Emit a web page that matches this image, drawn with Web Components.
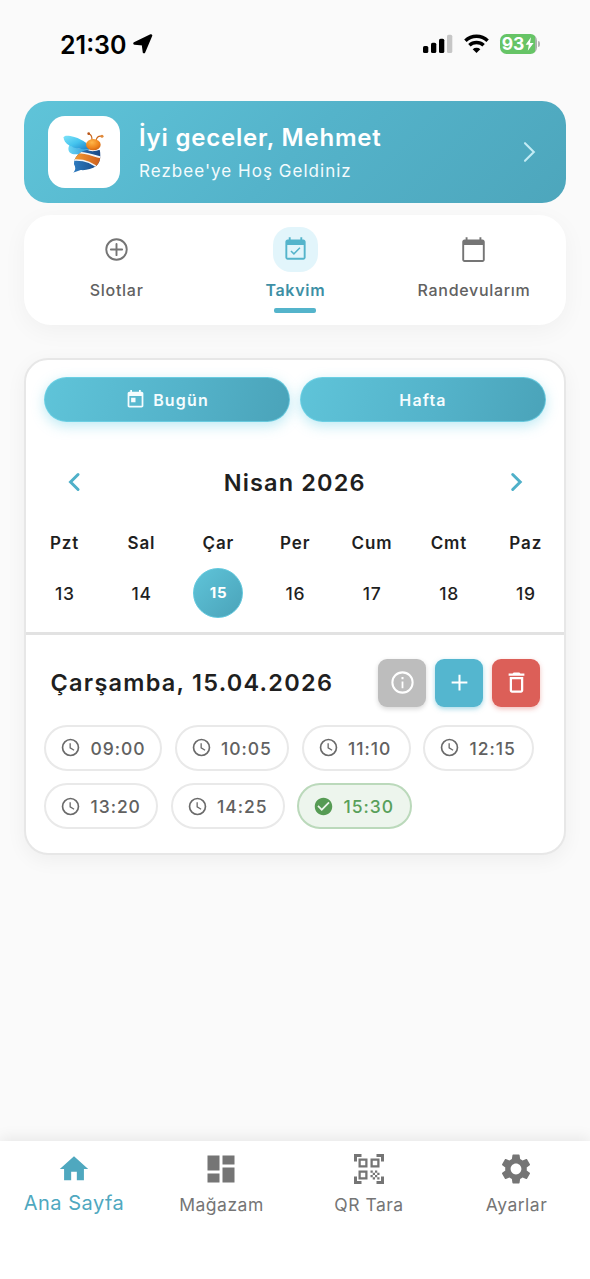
<!DOCTYPE html>
<html lang="tr">
<head>
<meta charset="utf-8">
<title>Rezbee</title>
<style>
html,body{margin:0;height:100%}
body{background:#fafafa;font-family:Inter,"Liberation Sans",sans-serif;color:#1f1f1f}
</style>
</head>
<body>
<rez-app></rez-app>
<script>
const ICONS = {
  plusCircle: '<g fill="none" stroke="currentColor" stroke-width="1.7"><circle cx="12" cy="12" r="9.1"/><path d="M12 7v10M7 12h10" stroke-linecap="round"/></g>',
  eventCheck: '<path d="M16.400 10.900l-.9-.9-4.910 4.990-2.200-2.200-.9.9L10.590 16.800zM19 3h-1V1h-1.700v2H7.700V1H6v2H5c-1.11 0-1.99.9-1.99 2L3 19c0 1.1.89 2 2 2h14c1.1 0 2-.9 2-2V5c0-1.1-.9-2-2-2zm.3 16.300H4.700V8h14.600v11.300z"/>',
  calendar: '<path d="M20 3h-1V1h-1.7v2H6.700V1H5v2H4c-1.100 0-2 .9-2 2v16c0 1.100.9 2 2 2h16c1.100 0 2-.9 2-2V5c0-1.100-.9-2-2-2zm.3 18.300H3.700V8h16.600v13.300z"/>',
  today: '<path d="M19 3h-1V1h-2v2H8V1H6v2H5c-1.11 0-1.99.9-1.99 2L3 19c0 1.1.89 2 2 2h14c1.1 0 2-.9 2-2V5c0-1.1-.9-2-2-2zm0 16H5V8h14v11zM7 10h5v5H7z"/>',
  left: '<path d="M14.700 7L9.700 12l5 5" fill="none" stroke="currentColor" stroke-width="2" stroke-linecap="round"/>',
  right: '<path d="M9.800 7L14.800 12l-5 5" fill="none" stroke="currentColor" stroke-width="2" stroke-linecap="round"/>',
  next: '<path d="M8 3.200L16.800 12l-8.800 8.800" fill="none" stroke="currentColor" stroke-width="2.100" stroke-linecap="round"/>',
  info: '<circle cx="12" cy="12" r="9" fill="none" stroke="currentColor" stroke-width="1.800"/><path d="M11.200 11h1.600v6h-1.600zM11.100 7.200h1.800v1.800h-1.800z"/>',
  plus: '<path d="M19 12.900h-6.100V19h-1.800v-6.100H5v-1.800h6.100V5h1.800v6.100H19z"/>',
  trash: '<path d="M6 19c0 1.1.9 2 2 2h8c1.1 0 2-.9 2-2V7H6v12zM8 9h8v10H8V9zm7.500-5l-1-1h-5l-1 1H5v2h14V4z"/>',
  clock: '<circle cx="12" cy="12" r="9.100" fill="none" stroke="currentColor" stroke-width="1.900"/><path d="M11.600 7v5.500l4.500 2.700" fill="none" stroke="currentColor" stroke-width="1.500"/>',
  check: '<path d="M12 2C6.480 2 2 6.480 2 12s4.480 10 10 10 10-4.480 10-10S17.520 2 12 2zm-2 15l-5-5 1.410-1.410L10 14.170l7.590-7.590L19 8l-9 9z"/>',
  home: '<path d="M10 20v-6h4v6h5v-8h3L12 3 2 12h3v8z"/>',
  dashboard: '<path d="M3 13h8V3H3v10zm0 8h8v-6H3v6zm10 0h8V11h-8v10zm0-18v6h8V3h-8z"/>',
  qr: '<path d="M9.500 6.500v3h-3v-3h3M11 5H5v6h6V5zM9.500 14.500v3h-3v-3h3M11 13H5v6h6v-6zM17.500 6.500v3h-3v-3h3M19 5h-6v6h6V5zM13 13h1.500v1.500H13zM14.500 14.500H16V16h-1.500zM16 13h1.500v1.500H16zM13 16h1.500v1.500H13zM14.500 17.500H16V19h-1.500zM16 16h1.500v1.500H16zM17.500 14.500H19V16h-1.500zM17.500 17.500H19V19h-1.500zM22 7h-2V4h-3V2h5v5zM22 22v-5h-2v3h-3v2h5zM2 22h5v-2H4v-3H2v5zM2 2v5h2V4h3V2H2z" fill-rule="evenodd"/>',
  gear: '<path d="M19.140 12.940c.04-.3.06-.61.06-.94 0-.32-.02-.64-.07-.94l2.030-1.580c.18-.14.23-.41.12-.61l-1.920-3.320c-.12-.22-.37-.29-.59-.22l-2.390.96c-.5-.38-1.030-.7-1.620-.94l-.36-2.540c-.04-.24-.24-.41-.48-.41h-3.840c-.24 0-.43.17-.47.41l-.36 2.540c-.59.24-1.130.57-1.620.94l-2.390-.96c-.22-.08-.47 0-.59.22L2.740 8.870c-.12.21-.08.47.12.61l2.030 1.580c-.05.3-.09.63-.09.94s.02.64.07.94l-2.030 1.580c-.18.14-.23.41-.12.61l1.920 3.320c.12.22.37.29.59.22l2.390-.96c.5.38 1.030.7 1.620.94l.36 2.540c.05.24.24.41.48.41h3.840c.24 0 .44-.17.47-.41l.36-2.540c.59-.24 1.130-.56 1.620-.94l2.390.96c.22.08.47 0 .59-.22l1.920-3.320c.12-.22.07-.47-.12-.61l-2.010-1.580zM12 15.600c-1.980 0-3.600-1.620-3.600-3.600s1.620-3.600 3.600-3.600 3.600 1.620 3.600 3.600-1.620 3.600-3.600 3.600z"/>'
};

const define = (name, render) => customElements.define(name, class extends HTMLElement {
  constructor() { super(); this.attachShadow({ mode: 'open' }); }
  connectedCallback() { this.shadowRoot.innerHTML = render(this); }
});
const attr = (el, n, d = '') => el.getAttribute(n) ?? d;

define('rez-icon', el => `
<style>:host{display:block;flex:none;width:${attr(el,'size',24)}px;height:${attr(el,'size',24)}px}svg{display:block;width:100%;height:100%}</style>
<svg viewBox="0 0 24 24" fill="currentColor">${ICONS[attr(el,'name')]}</svg>`);

define('status-bar', () => `
<style>
:host{display:flex;justify-content:space-between;align-items:center;height:88px;padding:0 50px 0 60px;box-sizing:border-box;color:#000}
.l,.r{display:flex;align-items:center}
.time{font-weight:600;font-size:25px;line-height:30px;letter-spacing:0;padding-top:1px}
.l svg{margin-left:6px}
.wifi{margin:0 11px 0 11px}
.bat{display:flex;align-items:center}
.cell{width:37px;height:20px;border-radius:6.500px;background:linear-gradient(90deg,#66c466 94%,#a9b5aa 94%);display:flex;align-items:center;justify-content:center;color:#fff;font-weight:700;font-size:17.500px;line-height:20px;letter-spacing:-.2px}
.cell svg{margin-left:1px}
.nub{width:2px;height:6px;border-radius:0 2px 2px 0;background:#b5b5b5;margin-left:1.500px}
</style>
<div class="l"><span class="time">21:30</span>
<svg width="20" height="20" viewBox="0 0 20 20"><path d="M1.500 9.500L18 1.500 11 18 10 10.300z" stroke="#000" stroke-width="2.600" stroke-linejoin="round"/></svg></div>
<div class="r">
<svg width="30" height="20" viewBox="0 0 30 20"><rect x="0" y="12" width="5.300" height="7" rx="1.600"/><rect x="8" y="8.700" width="5.300" height="10.300" rx="1.600"/><rect x="16" y="4.700" width="5.300" height="14.300" rx="1.600"/><rect x="24" y=".700" width="5.300" height="18.300" rx="1.600" fill="#c6c6c6"/></svg>
<svg class="wifi" width="25" height="20" viewBox="0 0 25 20"><g fill="none" stroke="#000" stroke-width="3.500"><path d="M1.400 6.700a16 16 0 0 1 22.200 0"/><path d="M5.400 11.300a10.300 10.300 0 0 1 14.200 0"/></g><path d="M8.700 15.200a5.600 5.600 0 0 1 7.600 0L12.500 19z"/></svg>
<div class="bat"><div class="cell"><span>93</span><svg width="9" height="14" viewBox="0 0 9 14"><path d="M6 .300L.600 7.700h3.200L2.800 13.700 8.600 5.900H5z" fill="#fff"/></svg></div><div class="nub"></div></div>
</div>`);

define('bee-logo', () => `
<style>:host{display:block;width:72px;height:72px;border-radius:17px;background:#fff;flex:none}svg{display:block}</style>
<svg width="72" height="72" viewBox="145 317 216 216">
<defs>
<linearGradient id="w" x1="0" y1="0" x2="1" y2="1"><stop offset="0" stop-color="#7fe3f8"/><stop offset=".5" stop-color="#45c4ee"/><stop offset="1" stop-color="#1c7cc4"/></linearGradient>
<linearGradient id="w2" x1="0" y1="0" x2="1" y2="0"><stop offset="0" stop-color="#6bd6f4"/><stop offset="1" stop-color="#2a93d6"/></linearGradient>
<radialGradient id="h" cx=".4" cy=".3" r=".8"><stop offset="0" stop-color="#ffb648"/><stop offset=".6" stop-color="#ee841c"/><stop offset="1" stop-color="#c75c12"/></radialGradient>
<linearGradient id="o" x1="0" y1="0" x2="1" y2="0"><stop offset="0" stop-color="#f7a136"/><stop offset="1" stop-color="#c9581a"/></linearGradient>
<linearGradient id="b" x1="0" y1="0" x2="1" y2="0"><stop offset="0" stop-color="#2f7fc4"/><stop offset="1" stop-color="#17427f"/></linearGradient>
<clipPath id="c"><path d="M262 419C275 425 290 422 300 418C305 436 302 456 290 467C277 476 256 481 243 479L220 487C229 479 228 470 223 462C222 440 240 424 262 419z"/></clipPath>
</defs>
<path d="M209 405C224 412 250 419 271 416C262 427 236 435 218 431C205 427 204 414 209 405z" fill="url(#w2)"/>
<path d="M192 381C193 374 207 375 224 380C251 388 268 403 272 415C255 420 226 414 210 406C197 399 191 389 192 381z" fill="url(#w)"/>
<g fill="none" stroke="#c9661c" stroke-width="3.500" stroke-linecap="round"><path d="M277 388C277 379 273 372 267 370M290 388C292 380 298 376 307 378"/></g>
<circle cx="267" cy="370" r="4" fill="#b95518"/><circle cx="307" cy="378" r="4.500" fill="#e08a3a"/>
<ellipse cx="281" cy="403" rx="22" ry="17" fill="url(#h)"/>
<g clip-path="url(#c)"><rect x="215" y="410" width="95" height="82" fill="url(#b)"/>
<path d="M222 428C252 420 280 438 310 442L300 478C276 454 248 446 215 450z" fill="url(#o)" stroke="#f3f6fa" stroke-width="5"/>
</g>
</svg>`);

define('welcome-card', el => `
<style>
:host{display:flex;align-items:center;height:102px;border-radius:24px;padding:0 25px 0 24px;box-sizing:border-box;color:#fff;background:linear-gradient(135deg,#5fc4d9 0%,#54b3ca 50%,#4da6bc 100%)}
.t{flex:1;margin-left:19px;margin-top:-1px}
.a{font-weight:600;font-size:24px;line-height:34px;letter-spacing:.78px;white-space:nowrap}
.b{font-size:17px;line-height:24px;margin-top:4px;letter-spacing:1.030px;color:#f3fbfd;white-space:nowrap}
rez-icon{color:#c3ecf5}
</style>
<bee-logo></bee-logo><div class="t"><div class="a"><slot name="title"></slot></div><div class="b"><slot></slot></div></div><rez-icon name="next" size="24"></rez-icon>`);

define('tab-item', el => { const on = el.hasAttribute('active'); return `
<style>
:host{display:flex;flex-direction:column;align-items:center;flex:1;color:${on ? '#3d8fa5' : '#616161'}}
.i{width:45px;height:45px;border-radius:18px;display:flex;align-items:center;justify-content:center;background:${on ? '#e2f5fb' : 'none'};color:${on ? '#54b4cb' : '#757575'}}
.t{font-size:16px;line-height:24px;margin-top:6px;font-weight:${on ? 570 : 460};letter-spacing:.7px;padding-left:.7px}
.u{width:42px;height:4.500px;border-radius:2px;margin-top:6px;background:${on ? '#54b4cb' : 'none'}}
</style><div class="i"><rez-icon name="${attr(el,'icon')}" size="27"></rez-icon></div><div class="t"><slot></slot></div><div class="u"></div>`});

define('tab-strip', () => `
<style>:host{display:flex;box-sizing:border-box;height:109.500px;padding:12px 3px 0;border-radius:27px;background:#fff;box-shadow:0 6px 24px rgba(0,0,0,.045)}</style><slot></slot>`);

define('pill-button', el => `
<style>:host{display:flex;flex:1;height:45px;box-sizing:border-box;border:1px solid rgba(112,212,232,.75);border-radius:23px;align-items:center;justify-content:center;gap:7px;color:#f4fcfe;background:linear-gradient(105deg,#5fc4d9,#54b3ca 55%,#4aa3b9) border-box;box-shadow:0 4px 13px rgba(84,200,225,.38);font-weight:570;font-size:16px;letter-spacing:1.150px}</style>
${el.hasAttribute('icon') ? `<rez-icon name="${attr(el,'icon')}" size="21"></rez-icon>` : ''}<span><slot></slot></span>`);

define('day-cell', el => { const on = el.hasAttribute('selected'); return `
<style>
:host{display:flex;flex-direction:column;align-items:center}
.w{font-weight:570;font-size:17px;line-height:24px;letter-spacing:.9px;padding-left:.4px}
.d{width:50px;height:50px;border-radius:50%;box-sizing:border-box;margin-top:13px;display:flex;align-items:center;justify-content:center;font-weight:450;font-size:17.500px;letter-spacing:.8px;padding:1px 0 0 .8px;
${on ? 'background:linear-gradient(135deg,#5fc4d9,#4aa3b9);border:1px solid #62c9de;color:#fff;font-size:15px;font-weight:650;padding-top:0' : ''}}
</style><div class="w">${attr(el,'name')}</div><div class="d"><slot></slot></div>`});

define('action-button', el => `
<style>:host{display:flex;width:48px;height:48px;border-radius:9px;align-items:center;justify-content:center;color:#fff;background:${attr(el,'color')};box-shadow:0 2px 5px ${attr(el,'glow')}}</style><rez-icon name="${attr(el,'icon')}" size="27"></rez-icon>`);

define('slot-chip', el => { const on = el.hasAttribute('booked'); return `
<style>:host{display:flex;align-items:center;box-sizing:border-box;width:${attr(el,'width')}px;height:46px;border-radius:23px;border:2px solid ${on ? '#bbd9bb' : '#e9e9e9'};background:${on ? '#edf5ed' : '#fff'};padding-left:14px;gap:9.500px;color:${on ? '#58a05a' : '#616161'};font-weight:550;font-size:17.500px;letter-spacing:.95px}
span{margin-top:1px}
rez-icon{color:${on ? '#569b54' : '#6a6a6a'}}</style><rez-icon name="${on ? 'check' : 'clock'}" size="21"></rez-icon><span><slot></slot></span>`});

define('calendar-card', () => `
<style>
:host{display:block;box-sizing:border-box;height:497px;border:2px solid #e7e7e7;border-radius:24px;background:#fff;box-shadow:0 5px 20px rgba(0,0,0,.05)}
.btns{display:flex;gap:10px;padding:17px 18px 0 18px}
.month{display:flex;align-items:center;justify-content:space-between;height:36px;padding:0 30px 0 29.500px;margin-top:42px;color:#4fb0c9}
.month b{font-weight:630;font-size:23.500px;letter-spacing:1.150px;color:#1f1f1f}
.week{display:grid;grid-template-columns:repeat(7,1fr);margin-top:30.500px}
.rule{height:3px;background:#e2e2e2;margin-top:14px}
.head{display:flex;align-items:center;justify-content:space-between;padding:0 24px 0 24.500px;margin-top:24px}
.head b{font-weight:630;font-size:23.500px;letter-spacing:1.250px}
.acts{display:flex;gap:9px}
.slots{display:flex;flex-wrap:wrap;gap:12.500px;padding:0 18px;margin-top:18px}
</style>
<div class="btns"><pill-button icon="today">Bugün</pill-button><pill-button>Hafta</pill-button></div>
<div class="month"><rez-icon name="left" size="36"></rez-icon><b>Nisan 2026</b><rez-icon name="right" size="36"></rez-icon></div>
<div class="week"><day-cell name="Pzt">13</day-cell><day-cell name="Sal">14</day-cell><day-cell name="Çar" selected>15</day-cell><day-cell name="Per">16</day-cell><day-cell name="Cum">17</day-cell><day-cell name="Cmt">18</day-cell><day-cell name="Paz">19</day-cell></div>
<div class="rule"></div>
<div class="head"><b>Çarşamba, 15.04.2026</b><div class="acts">
<action-button icon="info" color="#bdbdbd" glow="rgba(0,0,0,.16)"></action-button>
<action-button icon="plus" color="#54b6cf" glow="rgba(84,182,207,.5)"></action-button>
<action-button icon="trash" color="#dc5f58" glow="rgba(220,95,88,.4)"></action-button></div></div>
<div class="slots">
<slot-chip width="118">09:00</slot-chip><slot-chip width="114.500">10:05</slot-chip><slot-chip width="109">11:10</slot-chip><slot-chip width="111">12:15</slot-chip>
<slot-chip width="114">13:20</slot-chip><slot-chip width="114">14:25</slot-chip><slot-chip width="115" booked>15:30</slot-chip></div>`);

define('nav-item', el => { const on = el.hasAttribute('active'); return `
<style>
:host{display:flex;flex-direction:column;align-items:center;flex:1;padding-top:10px;color:${on ? '#4fa8bf' : '#757575'}}
.i{height:36px;display:flex;align-items:center}
.t{line-height:24px;margin-top:${on ? 4 : 6}px;font-size:${on ? 20 : 17.500}px;letter-spacing:.5px;padding-left:.5px;white-space:nowrap}
</style><div class="i"><rez-icon name="${attr(el,'icon')}" size="${on ? 34 : 36}"></rez-icon></div><div class="t"><slot></slot></div>`});

define('bottom-nav', () => `<style>:host{display:flex;height:138px;background:#fff;box-shadow:0 -3px 14px rgba(0,0,0,.08)}</style><slot></slot>`);

define('rez-app', () => `
<style>
:host{display:flex;flex-direction:column;height:1279px;overflow:hidden}
main{flex:1;padding:13px 24px 0 24px}
tab-strip{margin-top:12px}
calendar-card{margin-top:33.500px}
</style>
<status-bar></status-bar>
<main>
<welcome-card><span slot="title">İyi geceler, Mehmet</span>Rezbee'ye Hoş Geldiniz</welcome-card>
<tab-strip><tab-item icon="plusCircle">Slotlar</tab-item><tab-item icon="eventCheck" active>Takvim</tab-item><tab-item icon="calendar">Randevularım</tab-item></tab-strip>
<calendar-card></calendar-card>
</main>
<bottom-nav><nav-item icon="home" active>Ana Sayfa</nav-item><nav-item icon="dashboard">Mağazam</nav-item><nav-item icon="qr">QR Tara</nav-item><nav-item icon="gear">Ayarlar</nav-item></bottom-nav>`);
</script>
</body>
</html>
